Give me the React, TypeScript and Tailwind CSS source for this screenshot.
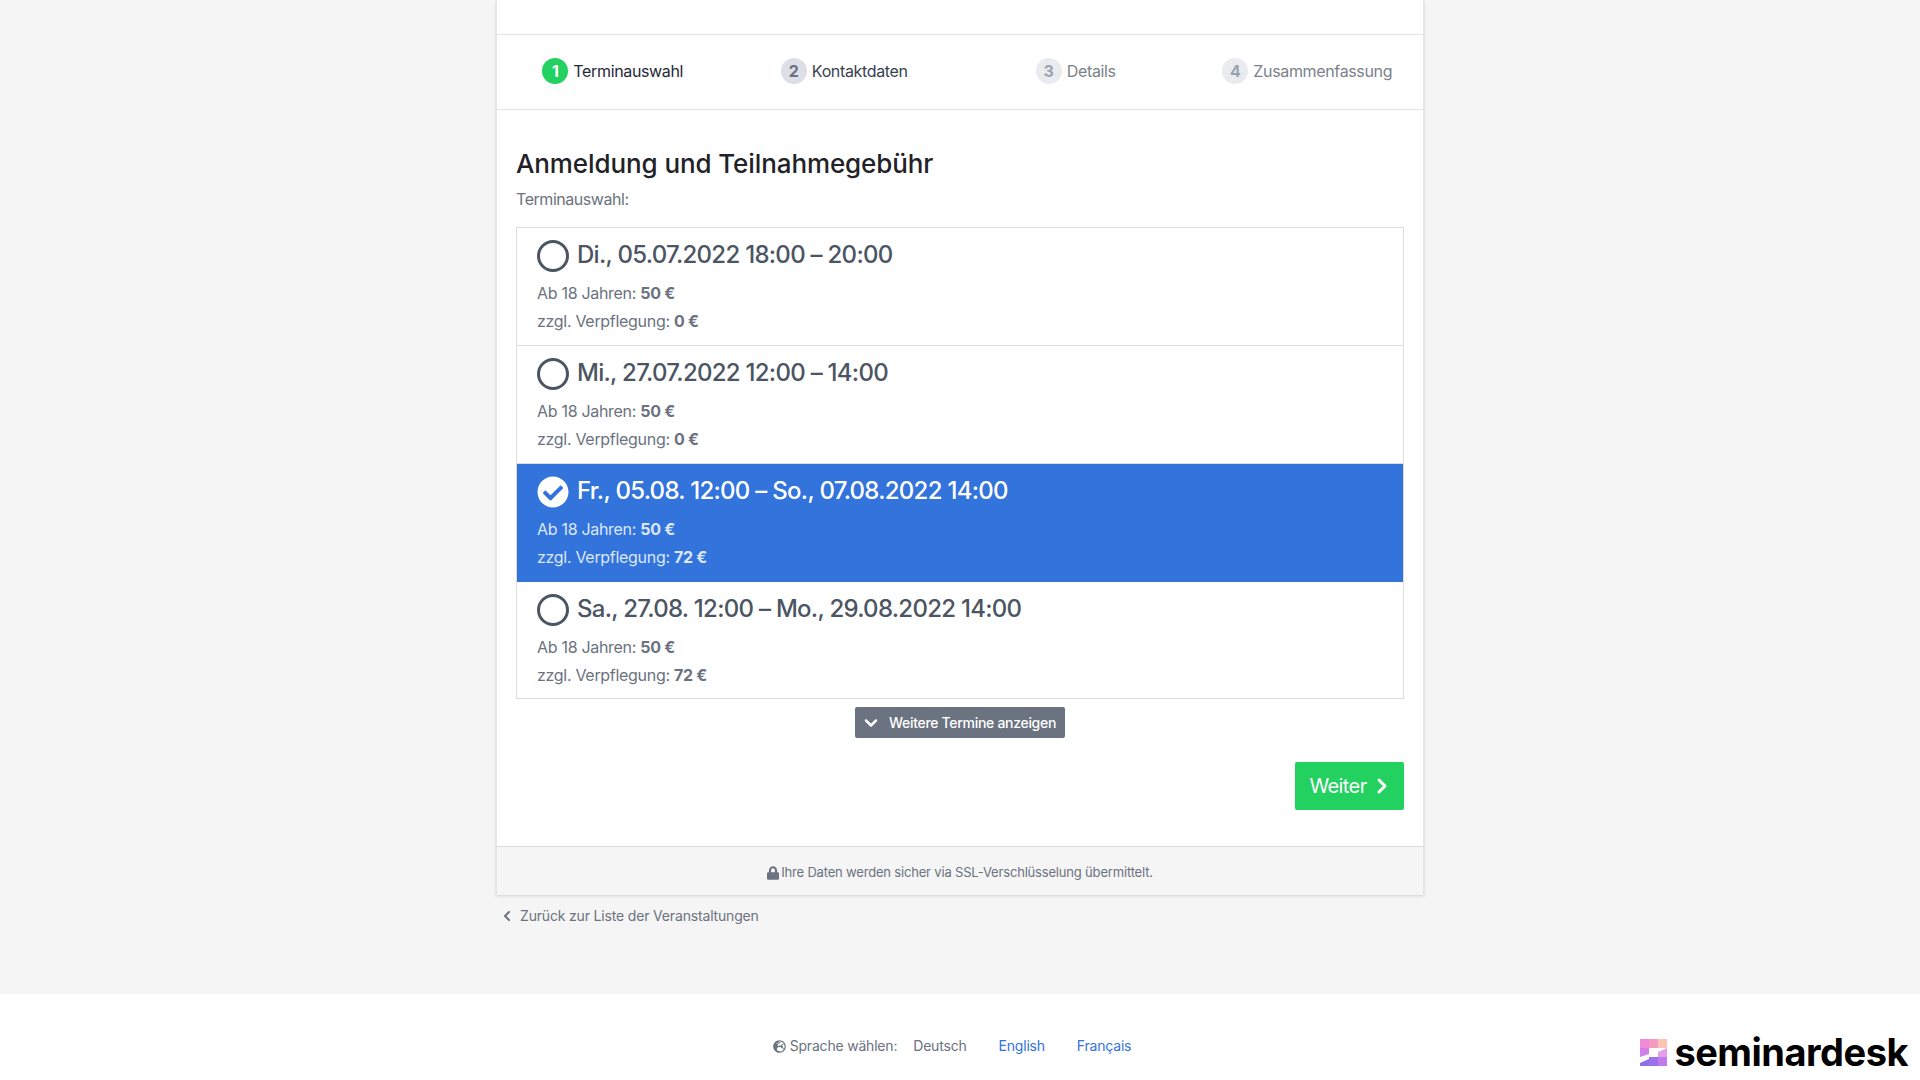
import { ChevronDown, ChevronLeft, ChevronRight } from "lucide-react";
import { FaCheckCircle, FaGlobeEurope, FaLock } from "react-icons/fa";

const steps = [
  { n: 1, label: "Terminauswahl", badge: "bg-[#22d160] text-white", text: "text-[#1f2937]" },
  { n: 2, label: "Kontaktdaten", badge: "bg-[#dcdfe5] text-[#6b7280]", text: "text-[#374151]" },
  { n: 3, label: "Details", badge: "bg-[#e9ebee] text-[#9ca3af]", text: "text-[#7b818a]" },
  { n: 4, label: "Zusammenfassung", badge: "bg-[#e9ebee] text-[#9ca3af]", text: "text-[#7b818a]" },
];

const dates = [
  { title: "Di., 05.07.2022 18:00 – 20:00", food: "0 €" },
  { title: "Mi., 27.07.2022 12:00 – 14:00", food: "0 €" },
  { title: "Fr., 05.08. 12:00 – So., 07.08.2022 14:00", food: "72 €", selected: true },
  { title: "Sa., 27.08. 12:00 – Mo., 29.08.2022 14:00", food: "72 €" },
];

const Logo = () => (
  <svg width="27" height="27" viewBox="0 0 27 27" className="shrink-0">
    <rect x="0" y="0" width="9" height="9" fill="#f28ad8" />
    <rect x="9" y="0" width="9" height="9" fill="#f59ac4" />
    <rect x="18" y="0" width="9" height="9" fill="#fcc4b4" />
    <path d="M0 9h9v6L0 18z" fill="#cf7fe8" />
    <path d="M18 13l9-4v9h-9z" fill="#e5a0ea" />
    <path d="M0 27v-3l9-4v7z" fill="#8f6fe8" />
    <rect x="9" y="18" width="9" height="9" fill="#9a72ee" />
    <rect x="18" y="18" width="9" height="9" fill="#c27bec" />
  </svg>
);

export default function App() {
  return (
    <div className="min-h-screen bg-[#f5f5f5] font-['Inter',sans-serif] flex flex-col">
      <main className="w-[928px] mx-auto">
        <div className="bg-white border-x border-[#e5e5e5] shadow-[0_1px_3px_rgba(0,0,0,0.15)]">
          <div className="h-[35px] border-b border-[#e2e2e2]" />

          <div className="h-[75px] pb-[2px] border-b border-[#e2e2e2] grid grid-cols-4">
            {steps.map((s) => (
              <div key={s.n} className="flex items-center justify-center gap-[5px]">
                <span className={`w-[26px] h-[26px] rounded-full flex items-center justify-center text-[16px] font-bold ${s.badge}`}>
                  {s.n}
                </span>
                <span className={`text-[16px] tracking-[-0.35px] ${s.text}`}>{s.label}</span>
              </div>
            ))}
          </div>

          <div className="px-[19px] pt-[36px] pb-[36px]">
            <h1 className="text-[26px] leading-[36px] font-[550] tracking-[-0.1px] text-[#1f2227]">Anmeldung und Teilnahmegebühr</h1>
            <p className="mt-[5px] text-[16px] leading-[24px] tracking-[-0.45px] text-[#6b7280]">Terminauswahl:</p>

            <div className="mt-[16px] border border-[#dcdcdc]">
              {dates.map((d) => (
                <div
                  key={d.title}
                  className={`h-[118px] px-[20px] border-b last:border-b-0 last:h-[116px] ${
                    d.selected ? "bg-[#3273dc] border-[#3273dc] text-white" : "bg-white border-[#dcdcdc] text-[#4b5563]"
                  }`}
                >
                  <div className="pt-[10px] flex items-center gap-[8px] h-[46px]">
                    {d.selected ? (
                      <FaCheckCircle className="w-[32px] h-[32px] text-white shrink-0" />
                    ) : (
                      <span className="w-[32px] h-[32px] rounded-full border-[3.5px] border-[#4b5563] shrink-0" />
                    )}
                    <span className="text-[24px] leading-[32px] font-[550] tracking-[-0.72px] -mt-[3px]">{d.title}</span>
                  </div>
                  <div className={`mt-[5px] text-[16px] leading-[28px] tracking-[-0.3px] ${d.selected ? "text-[#dbe7fa]" : "text-[#6b7280]"}`}>
                    <p>
                      Ab 18 Jahren: <b className="font-bold">50 €</b>
                    </p>
                    <p>
                      zzgl. Verpflegung: <b className="font-bold">{d.food}</b>
                    </p>
                  </div>
                </div>
              ))}
            </div>

            <div className="mt-[8px] flex justify-center">
              <button className="h-[31px] w-[210px] pr-[3px] rounded-[2px] bg-[#6b7280] text-white text-[14px] font-medium tracking-[-0.3px] flex items-center justify-center gap-[8px]">
                <ChevronDown className="w-[20px] h-[20px]" strokeWidth={3} />
                Weitere Termine anzeigen
              </button>
            </div>

            <div className="mt-[24px] flex justify-end">
              <button className="h-[48px] w-[109px] pl-[4px] rounded-[2px] bg-[#22d160] text-white text-[20px] tracking-[-0.6px] flex items-center justify-center gap-[3px]">
                Weiter
                <ChevronRight className="w-[24px] h-[24px]" strokeWidth={3} />
              </button>
            </div>
          </div>

          <div className="h-[49px] pt-[4px] border-t border-[#dcdcdc] bg-[#f5f5f5] flex items-center justify-center gap-[2px] text-[13px] tracking-[-0.18px] text-[#6b7280]">
            <FaLock className="w-[12px] h-[14px]" />
            Ihre Daten werden sicher via SSL-Verschlüsselung übermittelt.
          </div>
        </div>

        <a className="mt-[11px] ml-[3px] flex items-center gap-[5px] text-[14px] leading-[20px] tracking-[-0.17px] text-[#6b7280]">
          <ChevronLeft className="w-[16px] h-[16px]" strokeWidth={3} />
          Zurück zur Liste der Veranstaltungen
        </a>
      </main>

      <footer className="mt-auto h-[86px] bg-white relative">
        <div className="pt-[42px] pr-[16px] flex justify-center text-[14px] leading-[20px] tracking-[-0.2px] text-[#6b7280]">
          <div className="flex items-center">
            <FaGlobeEurope className="w-[13px] h-[13px] mr-[4px]" />
            <span>Sprache wählen:</span>
            <span className="ml-[16px]">Deutsch</span>
            <a className="ml-[32px] text-[#3273dc]">English</a>
            <a className="ml-[32px] text-[#3273dc]">Français</a>
          </div>
        </div>
        <div className="absolute right-[12px] bottom-[10px] flex items-center gap-[7px]">
          <Logo />
          <span className="text-[38px] leading-[36px] font-bold tracking-[-0.5px] text-black">seminardesk</span>
        </div>
      </footer>
    </div>
  );
}
